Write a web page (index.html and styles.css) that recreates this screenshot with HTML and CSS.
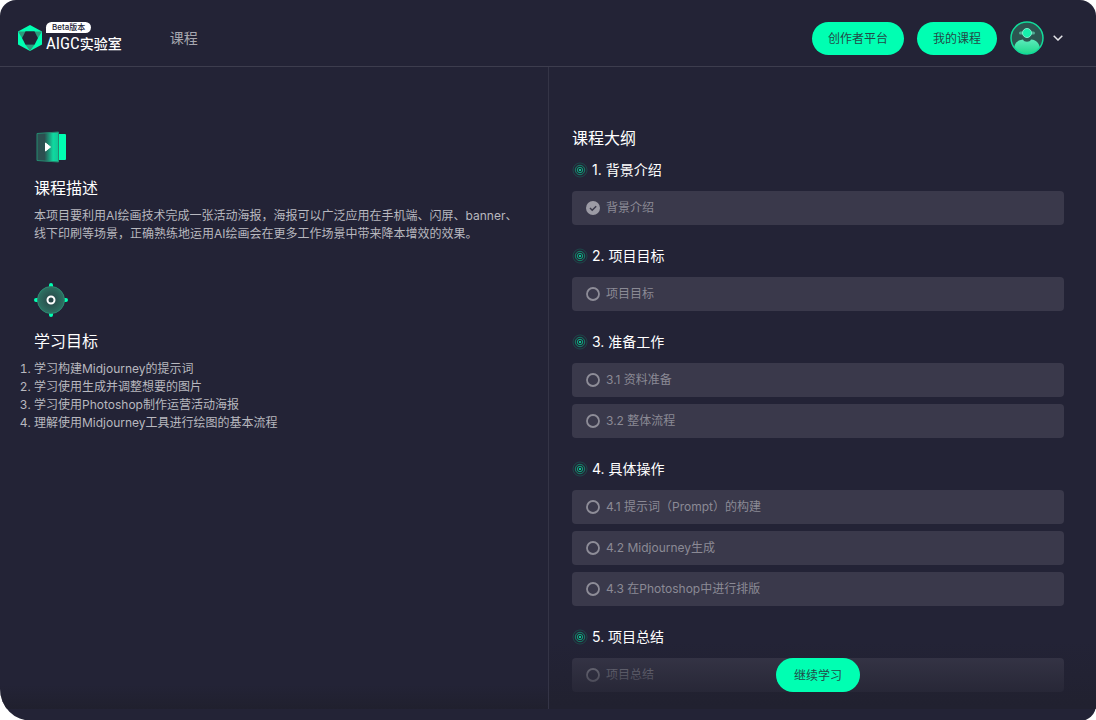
FILE: index.html
```html
<!DOCTYPE html>
<html lang="zh-CN">
<head>
  <meta charset="UTF-8">
  <meta name="viewport" content="width=device-width, initial-scale=1.0">
  <title>AIGC实验室</title>
  <link rel="stylesheet" href="styles.css">
</head>
<body>
  <svg class="sprite" aria-hidden="true">
    <symbol id="icon-dot" viewBox="0 0 16 16">
      <g fill="none" stroke="#04e39c">
        <circle cx="8" cy="8" r="7" stroke-opacity=".18"/>
        <circle cx="8" cy="8" r="4.700" stroke-opacity=".5"/>
        <circle cx="8" cy="8" r="2.700" stroke-opacity=".7"/>
      </g>
      <circle cx="8" cy="8" r="1" fill="#00ffb2"/>
    </symbol>
    <symbol id="icon-todo" viewBox="0 0 14 14">
      <circle cx="7" cy="7" r="6" fill="none" stroke="#8e8d98" stroke-width="1.800"/>
    </symbol>
    <symbol id="icon-done" viewBox="0 0 14 14">
      <circle cx="7" cy="7" r="7" fill="#9c9ba5"/>
      <path d="M4 7l2.200 2.200 4-4" fill="none" stroke="#3a394a" stroke-width="1.500"/>
    </symbol>
  </svg>

  <div class="page">
    <header class="header">
      <a class="logo" href="#">
        <svg class="logo-mark" viewBox="0 0 24 26" aria-hidden="true">
          <path d="M12 0l12 6.500v13L12 26 0 19.500v-13z" fill="#00ffb2"/>
          <path d="M0 6.500h7.500L4 13zM24 6.500h-7.500L20 13zM7.500 19.800h9L12 26z" fill="#2c9b7c"/>
          <path d="M7.500 6.200h9l3.500 6.800-3.500 6.800h-9L4 13z" fill="#232336"/>
        </svg>
        <span class="logo-text">
          <span class="logo-badge">Beta版本</span>
          <span class="logo-name">AIGC<b>实验室</b></span>
        </span>
      </a>
      <nav class="nav">
        <a href="#">课程</a>
      </nav>
      <div class="header-actions">
        <button class="btn" type="button">创作者平台</button>
        <button class="btn" type="button">我的课程</button>
        <button class="user" type="button" aria-label="账号">
          <svg class="avatar" viewBox="0 0 34 34" aria-hidden="true">
            <defs>
              <linearGradient id="avatar-body" x1="0" y1="0" x2="0" y2="1">
                <stop offset="0" stop-color="#5ceabb"/>
                <stop offset="1" stop-color="#19d888"/>
              </linearGradient>
              <clipPath id="avatar-clip"><circle cx="17" cy="17" r="16"/></clipPath>
            </defs>
            <circle cx="17" cy="17" r="16" fill="#2c5550"/>
            <g clip-path="url(#avatar-clip)">
              <path d="M4 34v-5c0-6 3-10 9-10.500 1 3 7 3 8 0 6 .5 9 4.500 9 10.500v5z" fill="url(#avatar-body)"/>
            </g>
            <path d="M10.500 12h13" stroke="#4fae93" stroke-width="3" stroke-linecap="round"/>
            <circle cx="17" cy="12" r="4.500" fill="#16f0ac" stroke="#7df0cd"/>
            <circle cx="17" cy="17" r="16" fill="none" stroke="#12dc9b" stroke-width="1.500"/>
          </svg>
          <svg class="chevron" viewBox="0 0 10 6" aria-hidden="true">
            <path d="M.7.7L5 5 9.300.7" fill="none" stroke="#e4e4e8" stroke-width="1.500"/>
          </svg>
        </button>
      </div>
    </header>

    <main class="main">
      <div class="intro">
        <section class="intro-block">
          <svg class="intro-icon" viewBox="0 0 34 34" aria-hidden="true">
            <defs>
              <linearGradient id="door" x1="0" x2="1">
                <stop offset=".35" stop-color="#2c4f50"/>
                <stop offset=".75" stop-color="#10d9a0"/>
                <stop offset="1" stop-color="#10c796"/>
              </linearGradient>
            </defs>
            <rect x="18" y="4" width="14" height="26" rx="1" fill="#00ffb2"/>
            <path d="M3 3.500L24.500 2v30L3 30.500z" fill="url(#door)" stroke="#258b71" stroke-linejoin="round"/>
            <path d="M11.500 13v8l5-4z" fill="#fff" stroke="#fff" stroke-linejoin="round"/>
          </svg>
          <h2>课程描述</h2>
          <p>本项目要利用AI绘画技术完成一张活动海报，海报可以广泛应用在手机端、闪屏、banner、线下印刷等场景，正确熟练地运用AI绘画会在更多工作场景中带来降本增效的效果。</p>
        </section>
        <section class="intro-block">
          <svg class="intro-icon" viewBox="0 0 34 34" aria-hidden="true">
            <defs>
              <radialGradient id="target">
                <stop offset="0" stop-color="#294346"/>
                <stop offset="1" stop-color="#2d7263"/>
              </radialGradient>
            </defs>
            <path d="M17 2v30M2 17h30" stroke="#00ffb2" stroke-width="4" stroke-linecap="round"/>
            <circle cx="17" cy="17" r="13.500" fill="url(#target)" stroke="#2c8c72"/>
            <circle cx="17" cy="17" r="3.500" fill="none" stroke="#fff" stroke-width="2"/>
          </svg>
          <h2>学习目标</h2>
          <ol>
            <li>学习构建Midjourney的提示词</li>
            <li>学习使用生成并调整想要的图片</li>
            <li>学习使用Photoshop制作运营活动海报</li>
            <li>理解使用Midjourney工具进行绘图的基本流程</li>
          </ol>
        </section>
      </div>

      <div class="outline">
        <h2>课程大纲</h2>
        <section class="chapter">
          <h3><svg><use href="#icon-dot"/></svg>1. 背景介绍</h3>
          <a class="lesson" href="#"><svg><use href="#icon-done"/></svg>背景介绍</a>
        </section>
        <section class="chapter">
          <h3><svg><use href="#icon-dot"/></svg>2. 项目目标</h3>
          <a class="lesson" href="#"><svg><use href="#icon-todo"/></svg>项目目标</a>
        </section>
        <section class="chapter">
          <h3><svg><use href="#icon-dot"/></svg>3. 准备工作</h3>
          <a class="lesson" href="#"><svg><use href="#icon-todo"/></svg>3.1 资料准备</a>
          <a class="lesson" href="#"><svg><use href="#icon-todo"/></svg>3.2 整体流程</a>
        </section>
        <section class="chapter">
          <h3><svg><use href="#icon-dot"/></svg>4. 具体操作</h3>
          <a class="lesson" href="#"><svg><use href="#icon-todo"/></svg>4.1 提示词（Prompt）的构建</a>
          <a class="lesson" href="#"><svg><use href="#icon-todo"/></svg>4.2 Midjourney生成</a>
          <a class="lesson" href="#"><svg><use href="#icon-todo"/></svg>4.3 在Photoshop中进行排版</a>
        </section>
        <section class="chapter">
          <h3><svg><use href="#icon-dot"/></svg>5. 项目总结</h3>
          <a class="lesson" href="#"><svg><use href="#icon-todo"/></svg>项目总结</a>
        </section>

        <!-- fade over the end of the list -->
        <div class="fade">
          <button class="btn btn-continue" type="button">继续学习</button>
        </div>
      </div>
    </main>
  </div>
</body>
</html>
```

FILE: styles.css
```css
* {
  box-sizing: border-box;
}

body {
  margin: 0;
  background: #fff;
  color: #fff;
  font-family: Inter, "Noto Sans CJK SC", sans-serif;
  font-size: 12px;
  line-height: 18px;
}

a {
  color: inherit;
  text-decoration: none;
}

h2,
h3,
p,
ol {
  margin: 0;
  padding: 0;
}

h2,
h3 {
  font-weight: 400;
}

.sprite {
  position: absolute;
  width: 0;
  height: 0;
}

.page {
  display: flex;
  flex-direction: column;
  min-height: 100vh;
  padding-bottom: 12px;
  background: #232336;
  border-radius: 16px 16px 16px 32px;
  overflow: hidden;
}

/* header */
.header {
  display: flex;
  align-items: center;
  height: 67px;
  padding: 10px 33px 0 18px;
  border-bottom: 1px solid #3d3d4e;
}

.logo {
  display: flex;
  align-items: center;
  gap: 4px;
}

.logo-mark {
  width: 24px;
  height: 26px;
}

.logo-text {
  display: flex;
  flex-direction: column;
  align-items: flex-start;
}

.logo-badge {
  padding: 0 6px;
  border-radius: 6px 6px 6px 0;
  background: #fff;
  color: #232336;
  font-size: 8px;
  font-weight: 500;
  line-height: 11px;
}

.logo-name {
  font-family: "Roboto Condensed", "Noto Sans CJK SC", sans-serif;
  font-size: 17px;
  line-height: 20px;
}

.logo-name b {
  font-size: 14px;
  font-weight: 500;
}

.nav {
  margin-left: 48px;
  color: #a7a7af;
  font-size: 14px;
}

.header-actions {
  display: flex;
  align-items: center;
  gap: 13px;
  margin-left: auto;
}

.btn {
  height: 33px;
  padding: 2px 16px 0;
  border: 0;
  border-radius: 17px;
  background: #00ffb2;
  color: #234a48;
  font: inherit;
  cursor: pointer;
}

.user {
  display: flex;
  align-items: center;
  gap: 9px;
  padding: 0;
  border: 0;
  background: none;
  cursor: pointer;
}

.avatar {
  width: 34px;
  height: 34px;
}

.chevron {
  width: 10px;
  height: 6px;
}

/* content */
.main {
  display: grid;
  grid-template-columns: 1fr 1fr;
  flex: 1;
  background: linear-gradient(rgba(32, 32, 46, 0) calc(100% - 24px), #20202e);
}

h2 {
  font-size: 16px;
  line-height: 24px;
}

.intro {
  padding: 63px 28px 0 34px;
  color: #b8b8bf;
}

.intro-block {
  margin-bottom: 40px;
}

.intro h2 {
  margin: 12px 0 7px;
  color: #fff;
}

.intro-icon {
  display: block;
  width: 34px;
  height: 34px;
}

.outline {
  position: relative;
  padding: 59px 32px 0 23px;
  border-left: 1px solid #343446;
}

.outline h2 {
  margin-bottom: 6px;
}

.chapter {
  display: flex;
  flex-direction: column;
  gap: 7px;
  margin-bottom: 17px;
}

.chapter h3 {
  display: flex;
  align-items: center;
  gap: 4px;
  font-size: 14px;
  line-height: 28px;
}

.chapter h3 svg {
  width: 16px;
  height: 16px;
}

.lesson {
  display: flex;
  align-items: center;
  gap: 6px;
  height: 34px;
  padding: 0 14px;
  border-radius: 4px;
  background: #3a394b;
  color: #8b8a95;
}

.lesson svg {
  width: 14px;
  height: 14px;
}

.fade {
  position: absolute;
  right: 0;
  bottom: 0;
  left: 0;
  display: flex;
  justify-content: center;
  height: 68px;
  padding: 17px 32px 0 23px;
  background: linear-gradient(rgba(33, 33, 48, 0), #212130);
}

.btn-continue {
  height: 34px;
  padding: 2px 18px 0;
}
```
